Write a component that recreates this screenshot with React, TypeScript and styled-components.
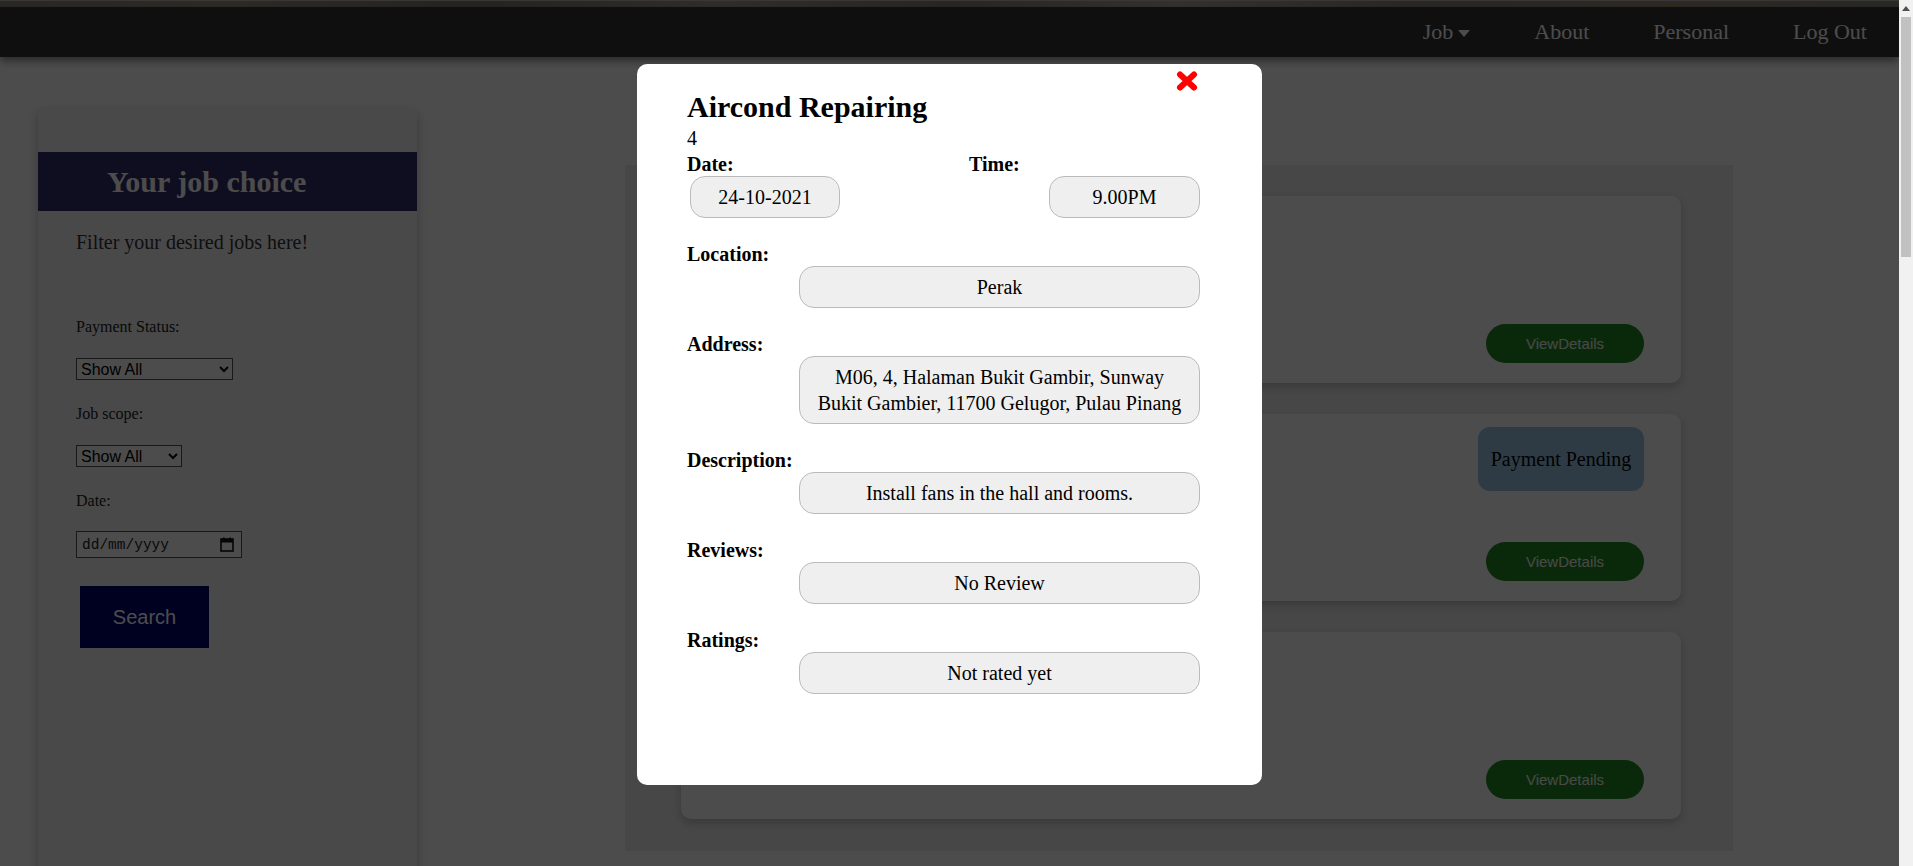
import React from 'react';
import styled, { createGlobalStyle } from 'styled-components';

const SCROLLBAR = 14;

const GlobalStyle = createGlobalStyle`
	html, body {
		margin: 0;
		padding: 0;
		background: #fff;
		font-family: "Liberation Serif", "Times New Roman", serif;
	}
	body { padding-right: ${SCROLLBAR}px; }
	* { box-sizing: border-box; }
`;

const ScrollTrack = styled.div`
	position: fixed;
	top: 0;
	right: 0;
	bottom: 0;
	width: ${SCROLLBAR}px;
	z-index: 20;
	background: #f1f1f1;
	display: flex;
	flex-direction: column;
	align-items: center;
`;

const ScrollArrow = styled.div`
	margin-top: 6px;
	width: 0;
	height: 0;
	border-left: 4px solid transparent;
	border-right: 4px solid transparent;
	border-bottom: 5px solid #505050;
`;

const ScrollThumb = styled.div`
	margin-top: 6px;
	width: 10px;
	height: 240px;
	background: #c1c1c1;
`;

const TopStrip = styled.div`
	height: 7px;
	background: linear-gradient(90deg, #8f877c 0%, #9b8f80 12%, #7f7a72 25%, #a39a8e 38%, #8a8276 50%, #b0a69a 62%, #8c847a 75%, #9e8a7a 88%, #8a8a80 100%);
	border-top: 1px solid #bbb;
`;

const NavBar = styled.nav`
	height: 50px;
	background: #333;
	display: flex;
	justify-content: flex-end;
	align-items: center;
	box-shadow: 0 4px 8px rgba(0, 0, 0, 0.45);
	position: relative;
	z-index: 1;
`;

const NavLink = styled.a`
	color: #fff;
	font-size: 22px;
	padding: 0 32px;
	display: flex;
	align-items: center;
	gap: 5px;
	text-decoration: none;
	cursor: pointer;
`;

const Caret = styled.span`
	width: 0;
	height: 0;
	border-left: 6px solid transparent;
	border-right: 6px solid transparent;
	border-top: 7px solid #fff;
	margin-top: 2px;
`;

const Layout = styled.div`
	display: flex;
	align-items: flex-start;
`;

const Sidebar = styled.aside`
	width: 379px;
	height: 2780px;
	margin: 52px 0 40px 38px;
	padding-top: 43px;
	background: #f5f5f5;
	box-shadow: 0 4px 10px rgba(0, 0, 0, 0.25);
	display: flex;
	flex-direction: column;
	align-items: flex-start;
`;

const SideHeader = styled.h2`
	width: 100%;
	height: 59px;
	margin: 0;
	padding-left: 69px;
	line-height: 59px;
	font-size: 30px;
	font-weight: bold;
	color: #fff;
	background: #352f6b;
`;

const SideIntro = styled.p`
	margin: 20px 0 0 38px;
	font-size: 20px;
	line-height: 23px;
	color: #333;
`;

const FilterLabel = styled.label<{ $gap: number }>`
	display: block;
	margin: ${({ $gap }) => $gap}px 0 0 38px;
	font-size: 16px;
	line-height: 18px;
	color: #222;
`;

const FilterSelect = styled.select<{ $w: number }>`
	margin: 22px 0 0 38px;
	width: ${({ $w }) => $w}px;
	height: 22px;
	font-family: "Liberation Sans", Arial, sans-serif;
	font-size: 16px;
	border: 1px solid #555;
	border-radius: 0;
	background: #fff;
	color: #000;
`;

const DateField = styled.div`
	margin: 21px 0 0 38px;
	width: 166px;
	height: 27px;
	border: 1px solid #555;
	background: #fff;
	padding: 0 7px 0 5px;
	display: flex;
	align-items: center;
	justify-content: space-between;
`;

const DateText = styled.input`
	width: 110px;
	border: none;
	outline: none;
	padding: 0;
	background: transparent;
	font-family: "Liberation Mono", "DejaVu Sans Mono", monospace;
	font-size: 14.5px;
	color: #222;
	&::placeholder { color: #222; }
`;

const SearchButton = styled.button`
	margin: 28px 0 0 42px;
	width: 129px;
	height: 62px;
	border: none;
	background: #00006e;
	color: #fff;
	font-family: "Liberation Sans", Arial, sans-serif;
	font-size: 20px;
	cursor: pointer;
`;

const JobPanel = styled.section`
	width: 1108px;
	margin: 108px 0 0 208px;
	padding: 31px 52px 32px 56px;
	background: #ededed;
	display: flex;
	flex-direction: column;
	gap: 31px;
`;

const JobCard = styled.div`
	height: 187px;
	background: #fff;
	border-radius: 10px;
	box-shadow: 0 4px 8px rgba(0, 0, 0, 0.2);
	padding: 13px 37px 20px;
	display: flex;
	flex-direction: column;
	align-items: flex-end;
`;

const StatusBadge = styled.div`
	width: 166px;
	height: 64px;
	border-radius: 12px;
	background: #9cc7e8;
	color: #000;
	font-size: 20px;
	display: flex;
	align-items: center;
	justify-content: center;
`;

const ViewButton = styled.button`
	margin-top: auto;
	width: 158px;
	height: 39px;
	border: none;
	border-radius: 20px;
	background: #228b22;
	color: #f4f4f4;
	font-family: "Liberation Sans", Arial, sans-serif;
	font-size: 15px;
	cursor: pointer;
`;

const Overlay = styled.div`
	position: fixed;
	top: 0;
	left: 0;
	bottom: 0;
	right: ${SCROLLBAR}px;
	z-index: 10;
	background: rgba(0, 0, 0, 0.7);
	display: flex;
	justify-content: center;
	align-items: flex-start;
	padding-top: 64px;
`;

const Modal = styled.div`
	position: relative;
	width: 625px;
	background: #fff;
	border-radius: 10px;
	padding: 26px 62px 91px 50px;
	color: #000;
`;

const CloseButton = styled.button`
	position: absolute;
	top: 7px;
	right: 64px;
	width: 22px;
	height: 20px;
	padding: 0;
	border: none;
	background: transparent;
	cursor: pointer;
	display: flex;
`;

const ModalTitle = styled.h1`
	margin: 0;
	font-size: 30px;
	line-height: 34px;
	font-weight: bold;
`;

const JobId = styled.div`
	margin-top: 3px;
	font-size: 20px;
	line-height: 23px;
`;

const DateTimeRow = styled.div`
	margin-top: 3px;
	display: grid;
	grid-template-columns: 282px 1fr;
`;

const Column = styled.div<{ $end?: boolean }>`
	display: flex;
	flex-direction: column;
	align-items: ${({ $end }) => ($end ? 'flex-end' : 'flex-start')};
`;

const FieldLabel = styled.div`
	align-self: flex-start;
	font-size: 20px;
	line-height: 23px;
	font-weight: bold;
`;

const ValueBox = styled.div<{ $w?: number; $indent?: number }>`
	width: ${({ $w }) => ($w ? `${$w}px` : 'auto')};
	margin-left: ${({ $indent }) => $indent || 0}px;
	background: #efefef;
	border: 1px solid #bbb;
	border-radius: 15px;
	padding: 7px 14px;
	font-size: 20px;
	line-height: 26px;
	text-align: center;
`;

const Field = styled.div`
	margin-top: 25px;
	display: flex;
	flex-direction: column;
`;

const details = [
	{ label: 'Location:', value: 'Perak' },
	{ label: 'Address:', value: 'M06, 4, Halaman Bukit Gambir, Sunway Bukit Gambier, 11700 Gelugor, Pulau Pinang' },
	{ label: 'Description:', value: 'Install fans in the hall and rooms.' },
	{ label: 'Reviews:', value: 'No Review' },
	{ label: 'Ratings:', value: 'Not rated yet' },
];

const jobs = [{ pending: false }, { pending: true }, { pending: false }];

const App = (): JSX.Element => {
	return (
		<>
			<GlobalStyle />
			<TopStrip />
			<NavBar>
				<NavLink>Job<Caret /></NavLink>
				<NavLink>About</NavLink>
				<NavLink>Personal</NavLink>
				<NavLink>Log Out</NavLink>
			</NavBar>
			<Layout>
				<Sidebar>
					<SideHeader>Your job choice</SideHeader>
					<SideIntro>Filter your desired jobs here!</SideIntro>
					<FilterLabel $gap={64}>Payment Status:</FilterLabel>
					<FilterSelect $w={157} defaultValue="all">
						<option value="all">Show All</option>
						<option value="pending">Payment Pending</option>
						<option value="paid">Paid</option>
					</FilterSelect>
					<FilterLabel $gap={25}>Job scope:</FilterLabel>
					<FilterSelect $w={106} defaultValue="all">
						<option value="all">Show All</option>
						<option value="aircond">Aircond</option>
					</FilterSelect>
					<FilterLabel $gap={25}>Date:</FilterLabel>
					<DateField>
						<DateText type="text" placeholder="dd/mm/yyyy" />
						<svg width="14" height="15" viewBox="0 0 14 15">
							<rect x="1" y="2" width="12" height="12" fill="none" stroke="#111" strokeWidth="1.6" />
							<rect x="1" y="2" width="12" height="3.5" fill="#111" />
							<rect x="3" y="0.5" width="1.6" height="3" fill="#111" />
							<rect x="9.4" y="0.5" width="1.6" height="3" fill="#111" />
						</svg>
					</DateField>
					<SearchButton>Search</SearchButton>
				</Sidebar>
				<JobPanel>
					{jobs.map((job, i) => (
						<JobCard key={i}>
							{job.pending && <StatusBadge>Payment Pending</StatusBadge>}
							<ViewButton>ViewDetails</ViewButton>
						</JobCard>
					))}
				</JobPanel>
			</Layout>
			<Overlay>
				<Modal>
					<CloseButton aria-label="close">
						<svg width="22" height="20" viewBox="0 0 22 20">
							<path d="M4 3.5 L18 16.5 M18 3.5 L4 16.5" stroke="#ff0000" strokeWidth="6" strokeLinecap="round" />
						</svg>
					</CloseButton>
					<ModalTitle>Aircond Repairing</ModalTitle>
					<JobId>4</JobId>
					<DateTimeRow>
						<Column>
							<FieldLabel>Date:</FieldLabel>
							<ValueBox $w={150} $indent={3}>24-10-2021</ValueBox>
						</Column>
						<Column $end>
							<FieldLabel>Time:</FieldLabel>
							<ValueBox $w={151}>9.00PM</ValueBox>
						</Column>
					</DateTimeRow>
					{details.map((d) => (
						<Field key={d.label}>
							<FieldLabel>{d.label}</FieldLabel>
							<ValueBox $indent={112}>{d.value}</ValueBox>
						</Field>
					))}
				</Modal>
			</Overlay>
			<ScrollTrack>
				<ScrollArrow />
				<ScrollThumb />
			</ScrollTrack>
		</>
	);
};

export default App;
